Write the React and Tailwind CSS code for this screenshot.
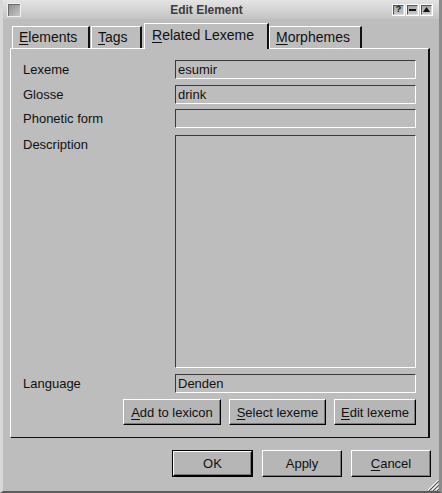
import React from 'react';

const U = ({ children }) => <span className="underline underline-offset-2">{children}</span>;

const Field = ({ value, className = '' }) => (
  <div
    className={`w-[241px] h-[19px] bg-[#bdbdbd] border border-t-[#3a3a3a] border-l-[#3a3a3a] border-r-white border-b-white pl-[2px] leading-[17px] text-[#111] ${className}`}
  >
    {value}
  </div>
);

const Btn = ({ children, w }) => (
  <button
    className={`${w} h-[26px] bg-[#b6b6b6] border border-t-white border-l-white border-r-black border-b-black shadow-[inset_-1px_-1px_0_#7a7a7a] text-[13px] text-[#111] leading-none`}
  >
    {children}
  </button>
);

const Tab = ({ children, w, active, className = '' }) => (
  <div
    className={`${w} ${
      active ? 'h-[26px] -mb-px z-10 pt-[1px]' : 'h-[22px] pt-0'
    } bg-[#bdbdbd] border-t border-l border-t-white border-l-white border-r-2 border-r-[#111] pl-[6px] text-[14px] text-[#111] ${className}`}
  >
    {children}
  </div>
);

const TitleBtn = ({ children }) => (
  <div className="w-[13px] h-[12px] border border-white bg-[#9a9a9a] flex items-center justify-center">
    <div className="w-[11px] h-[10px] border border-t-[#555] border-l-[#555] border-r-[#ddd] border-b-[#ddd] bg-gradient-to-b from-[#a8a8a8] to-[#c6c6c6] flex items-center justify-center text-[9px] font-bold text-[#111] leading-none">
      {children}
    </div>
  </div>
);

export default function App() {
  return (
    <div className="w-[442px] h-[493px] bg-[#bdbdbd] flex flex-col border-l-[3px] border-l-[#d8d8d8] border-r-[3px] border-r-[#8c8c8c] border-b-[2px] border-b-[#5c5c5c] font-['Liberation_Sans',Arial,sans-serif] text-[13px] relative overflow-hidden">
      {/* title bar */}
      <div className="h-[19px] flex items-center bg-gradient-to-b from-[#e4e4e4] to-[#c4c4c4] pl-[4px] pr-[4px]">
        <div className="w-[14px] h-[14px] border border-[#f0f0f0] bg-gradient-to-br from-[#8a8a8a] to-[#c8c8c8] shadow-[inset_1px_1px_0_#6a6a6a]" />
        <div className="flex-1 text-center font-bold text-[12px] text-[#3c3c3c]">Edit Element</div>
        <div className="flex gap-[1px] mr-[2px]">
          <TitleBtn>?</TitleBtn>
          <TitleBtn>
            <div className="w-[7px] h-[2px] bg-[#111]" />
          </TitleBtn>
          <TitleBtn>
            <svg width="7" height="5" viewBox="0 0 7 5">
              <path d="M0 5 L3.5 0 L7 5 Z" fill="#111" />
            </svg>
          </TitleBtn>
        </div>
      </div>

      {/* tabs */}
      <div className="flex items-end pl-[9px] mt-[4px] relative z-10">
        <Tab w="w-[78px]">
          <U>E</U>lements
        </Tab>
        <Tab w="w-[51px]" className="ml-[1px]">
          <U>T</U>ags
        </Tab>
        <Tab w="w-[125px]" active className="ml-[2px] pl-[7px]">
          <U>R</U>elated Lexeme
        </Tab>
        <Tab w="w-[93px]">
          <U>M</U>orphemes
        </Tab>
      </div>

      {/* panel */}
      <div className="ml-[7px] w-[420px] h-[390px] border-t border-l border-t-white border-l-white border-r-2 border-r-[#111] border-b border-b-[#111] pt-[11px] pl-[12px] flex flex-col">
        <div className="flex items-center">
          <div className="w-[152px] text-[#111]">Lexeme</div>
          <Field value="esumir" />
        </div>
        <div className="flex items-center mt-[5px]">
          <div className="w-[152px] text-[#111]">Glosse</div>
          <Field value="drink" />
        </div>
        <div className="flex items-center mt-[5px]">
          <div className="w-[152px] text-[#111]">Phonetic form</div>
          <Field value="" />
        </div>
        <div className="flex items-start mt-[6px]">
          <div className="w-[152px] text-[#111]">Description</div>
          <Field value="" className="!h-[233px]" />
        </div>
        <div className="flex items-center mt-[6px]">
          <div className="w-[152px] text-[#111]">Language</div>
          <Field value="Denden" />
        </div>
        <div className="flex justify-end gap-[8px] mt-[6px] pr-[12px]">
          <Btn w="w-[98px]">
            <U>A</U>dd to lexicon
          </Btn>
          <Btn w="w-[97px]">
            <U>S</U>elect lexeme
          </Btn>
          <Btn w="w-[82px]">
            <U>E</U>dit lexeme
          </Btn>
        </div>
      </div>

      {/* dialog buttons */}
      <div className="flex justify-end gap-[9px] mt-[12px] pr-[8px]">
        <div className="border border-black">
          <Btn w="w-[79px] !h-[25px]">OK</Btn>
        </div>
        <Btn w="w-[80px] !h-[27px]">Apply</Btn>
        <Btn w="w-[80px] !h-[27px]">
          <U>C</U>ancel
        </Btn>
      </div>

      {/* resize grip */}
      <svg className="absolute right-0 bottom-0" width="14" height="14" viewBox="0 0 14 14">
        <path d="M13 3 L3 13 M13 7 L7 13 M13 11 L11 13" stroke="#ffffff" strokeWidth="1" />
        <path d="M14 4 L4 14 M14 8 L8 14 M14 12 L12 14" stroke="#555" strokeWidth="1" />
      </svg>
    </div>
  );
}
